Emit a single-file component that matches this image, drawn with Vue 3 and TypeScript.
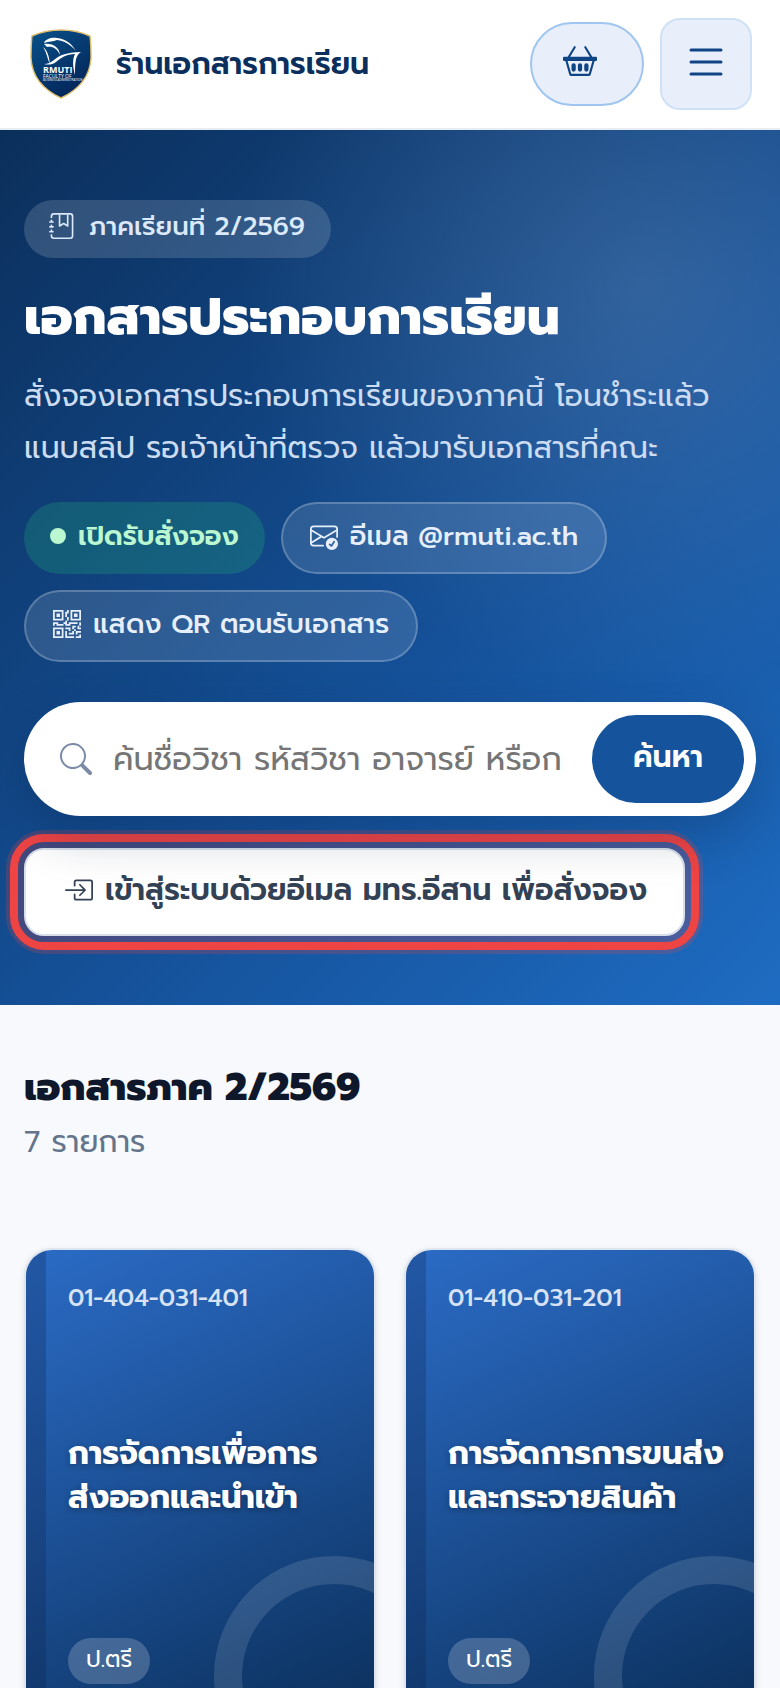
<script setup lang="ts">
import { ref } from 'vue'

interface Course {
  code: string
  title: string
  level: string
}

const query = ref('')
const term = '2/2569'
const courses: Course[] = [
  { code: '01-404-031-401', title: 'การจัดการเพื่อการ\nส่งออกและนำเข้า', level: 'ป.ตรี' },
  { code: '01-410-031-201', title: 'การจัดการการขนส่ง\nและกระจายสินค้า', level: 'ป.ตรี' },
]
</script>

<template>
  <div class="page">
    <header class="topbar">
      <a class="brand" href="#">
        <svg class="logo" viewBox="0 0 62 70" role="img" aria-label="RMUTI">
          <defs>
            <linearGradient id="shield" x1="0" y1="0" x2="0.6" y2="1">
              <stop offset="0" stop-color="#07528a" />
              <stop offset="1" stop-color="#04265a" />
            </linearGradient>
          </defs>
          <path d="M31 1C42 1 51 3 60 7C61 15 61 22 61 29C60 48 48 61 31 69C14 61 2 48 1 29C1 22 1 15 2 7C11 3 20 1 31 1Z" fill="url(#shield)" stroke="#e0bd68" stroke-width="1.4" />
          <path d="M14 14C15 10 22 8 27 9C36 10 42 15 46 22C41 16 35 12 27 11C23 13 19 12 14 14Z" fill="#fff" />
          <path d="M14 15C23 14 29 18 30 26C27 19 22 17 17 18Z" fill="#fff" />
          <path d="M13 18C18 22 19 28 20 35C17 29 17 24 13 18Z" fill="#fff" />
          <path d="M14 35C22 35 24 29 32 26C38 24 44 23 51 23C46 26 45 31 45 46C43 39 42 31 45 25C36 25 31 29 26 33C22 36 18 36 14 35Z" fill="#fff" />
          <text class="logo-name" x="13" y="44">RMUTI</text>
          <text class="logo-sub" x="13" y="49">FACULTY OF</text>
          <text class="logo-tiny" x="13" y="52">BUSINESS ADMINISTRATION</text>
        </svg>
        <span>ร้านเอกสารการเรียน</span>
      </a>
      <div class="actions">
        <button class="cart" type="button" aria-label="ตะกร้า">
          <svg class="i34" viewBox="0 0 16 16" fill="currentColor"><path d="M5.930 1.757 3.383 6h9.234L10.070 1.757a.5.5 0 1 1 .858-.514L13.783 6H15.500a.5.5 0 0 1 .5.5v1a.5.5 0 0 1-.5.5h-.623l-1.844 6.456a.75.75 0 0 1-.722.544H3.690a.75.75 0 0 1-.722-.544L1.123 8H.5a.5.5 0 0 1-.5-.5v-1A.5.5 0 0 1 .5 6h1.717L5.070 1.243a.5.5 0 0 1 .86.514ZM2.163 8l1.714 6h8.246l1.714-6H2.163ZM4 10a1 1 0 0 1 2 0v2a1 1 0 1 1-2 0v-2Zm3 0a1 1 0 0 1 2 0v2a1 1 0 1 1-2 0v-2Zm4-1a1 1 0 0 1 1 1v2a1 1 0 1 1-2 0v-2a1 1 0 0 1 1-1Z" /></svg>
        </button>
        <button class="menu" type="button" aria-label="เมนู">
          <svg class="i48" viewBox="0 0 16 16" fill="currentColor"><path d="M2.500 12a.5.5 0 0 1 .5-.5h10a.5.5 0 0 1 0 1H3a.5.5 0 0 1-.5-.5zm0-4a.5.5 0 0 1 .5-.5h10a.5.5 0 0 1 0 1H3a.5.5 0 0 1-.5-.5zm0-4a.5.5 0 0 1 .5-.5h10a.5.5 0 0 1 0 1H3a.5.5 0 0 1-.5-.5z" /></svg>
        </button>
      </div>
    </header>

    <section class="hero">
      <p class="term">
        <svg class="i26" viewBox="0 0 16 16" fill="currentColor"><path fill-rule="evenodd" d="M6 8V1h1v6.117L8.743 6.070a.5.5 0 0 1 .514 0L11 7.117V1h1v7a.5.5 0 0 1-.757.429L9 7.083 6.757 8.430A.5.5 0 0 1 6 8z" /><path d="M3 0h10a2 2 0 0 1 2 2v12a2 2 0 0 1-2 2H3a2 2 0 0 1-2-2v-1h1v1a1 1 0 0 0 1 1h10a1 1 0 0 0 1-1V2a1 1 0 0 0-1-1H3a1 1 0 0 0-1 1v1H1V2a2 2 0 0 1 2-2z" /><path d="M1 5v-.5a.5.5 0 0 1 1 0V5h.5a.5.5 0 0 1 0 1h-2a.5.5 0 0 1 0-1H1zm0 3v-.5a.5.5 0 0 1 1 0V8h.5a.5.5 0 0 1 0 1h-2a.5.5 0 0 1 0-1H1zm0 3v-.5a.5.5 0 0 1 1 0v.5h.5a.5.5 0 0 1 0 1h-2a.5.5 0 0 1 0-1H1z" /></svg>
        <span>ภาคเรียนที่ {{ term }}</span>
      </p>
      <h1>เอกสารประกอบการเรียน</h1>
      <p class="lead">สั่งจองเอกสารประกอบการเรียนของภาคนี้ โอนชำระแล้ว<br>แนบสลิป รอเจ้าหน้าที่ตรวจ แล้วมารับเอกสารที่คณะ</p>
      <ul class="chips">
        <li class="chip open"><i class="dot"></i><span>เปิดรับสั่งจอง</span></li>
        <li class="chip">
          <svg class="i28" viewBox="0 0 16 16" fill="currentColor"><path d="M2 2a2 2 0 0 0-2 2v8.010A2 2 0 0 0 2 14h5.500a.5.5 0 0 0 0-1H2a1 1 0 0 1-.966-.741l5.640-3.471L8 9.583l7-4.200V8.500a.5.5 0 0 0 1 0V4a2 2 0 0 0-2-2H2Zm3.708 6.208L1 11.105V5.383l4.708 2.825ZM1 4.217V4a1 1 0 0 1 1-1h12a1 1 0 0 1 1 1v.217l-7 4.200-7-4.200Z" /><path d="M16 12.500a3.500 3.500 0 1 1-7 0 3.500 3.500 0 0 1 7 0Zm-1.993-1.679a.5.5 0 0 0-.686.172l-1.170 1.950-.547-.547a.5.5 0 0 0-.708.708l.774.773a.75.75 0 0 0 1.174-.144l1.335-2.226a.5.5 0 0 0-.172-.686Z" /></svg>
          <span>อีเมล @rmuti.ac.th</span>
        </li>
        <li class="chip">
          <svg class="i28" viewBox="0 0 16 16" fill="currentColor"><path d="M2 2h2v2H2V2Z" /><path d="M6 0v6H0V0h6ZM5 1H1v4h4V1ZM4 12H2v2h2v-2Z" /><path d="M6 10v6H0v-6h6Zm-5 1v4h4v-4H1Zm11-9h2v2h-2V2Z" /><path d="M10 0v6h6V0h-6Zm5 1v4h-4V1h4ZM8 1V0h1v2H8v2H7V1h1Zm0 5V4h1v2H8ZM6 8V7h1V6h1v2h1V7h5v1h-4v1H7V8H6Zm0 0v1H2V8H1v1H0V7h3v1h3Zm10 1h-1V7h1v2Zm-1 0h-1v2h2v-1h-1V9Zm-4 0h2v1h-1v1h-1V9Zm2 3v-1h-1v1h-1v1H9v1h3v-2h1Zm0 0h3v1h-2v1h-1v-2Zm-4-1v1h1v-2H7v1h2Z" /><path d="M7 12h1v3h4v1H7v-4Zm9 2v2h-3v-1h2v-1h1Z" /></svg>
          <span>แสดง QR ตอนรับเอกสาร</span>
        </li>
      </ul>
      <form class="search" @submit.prevent>
        <svg class="i32" viewBox="0 0 16 16" fill="currentColor"><path d="M11.742 10.344a6.500 6.500 0 1 0-1.397 1.398h-.001c.03.04.062.078.098.115l3.850 3.850a1 1 0 0 0 1.415-1.414l-3.850-3.850a1.007 1.007 0 0 0-.115-.1zM12 6.500a5.500 5.500 0 1 1-11 0 5.500 5.500 0 0 1 11 0z" /></svg>
        <input v-model="query" type="text" aria-label="ค้นหาเอกสาร" placeholder="ค้นชื่อวิชา รหัสวิชา อาจารย์ หรือก">
        <button type="submit">ค้นหา</button>
      </form>
      <a class="login" href="#">
        <svg class="i28" viewBox="0 0 16 16" fill="currentColor"><path fill-rule="evenodd" d="M6 3.500a.5.5 0 0 1 .5-.5h8a.5.5 0 0 1 .5.5v9a.5.5 0 0 1-.5.5h-8a.5.5 0 0 1-.5-.5v-2a.5.5 0 0 0-1 0v2A1.500 1.500 0 0 0 6.500 14h8a1.500 1.500 0 0 0 1.500-1.500v-9A1.500 1.500 0 0 0 14.500 2h-8A1.500 1.500 0 0 0 5 3.500v2a.5.5 0 0 0 1 0v-2z" /><path fill-rule="evenodd" d="M11.854 8.354a.5.5 0 0 0 0-.708l-3-3a.5.5 0 1 0-.708.708L10.293 7.500H.5a.5.5 0 0 0 0 1h9.793l-2.147 2.146a.5.5 0 0 0 .708.708l3-3z" /></svg>
        <span>เข้าสู่ระบบด้วยอีเมล มทร.อีสาน เพื่อสั่งจอง</span>
      </a>
    </section>

    <main class="catalog">
      <h2>เอกสารภาค {{ term }}</h2>
      <p class="count">7 รายการ</p>
      <div class="grid">
        <article v-for="course in courses" :key="course.code" class="card">
          <div class="cover">
            <span class="code">{{ course.code }}</span>
            <h3>{{ course.title }}</h3>
            <span class="level">{{ course.level }}</span>
          </div>
        </article>
      </div>
    </main>
  </div>
</template>

<style>
body {
  margin: 0;
  background: #f7f9fd;
}
</style>

<style scoped>
.page {
  height: 100vh;
  overflow: hidden;
  background: #f7f9fd;
  color: #0f172a;
  font-family: Prompt, Kanit, "Noto Sans Thai", "Noto Sans", sans-serif;
  font-size: 28px;
}
.page *, .cover::before, .cover::after { box-sizing: border-box; }
h1, h2, h3, p, ul { margin: 0; padding: 0; }
a { color: inherit; text-decoration: none; }
button, input { font: inherit; }
svg { display: block; flex: none; }
.i26 { width: 26px; height: 26px; }
.i28 { width: 28px; height: 28px; }
.i32 { width: 32px; height: 32px; }
.i34 { width: 34px; height: 34px; }
.i48 { width: 48px; height: 48px; }

.topbar {
  display: flex;
  align-items: center;
  justify-content: space-between;
  height: 130px;
  padding: 0 28px 0 30px;
  background: #fff;
  border-bottom: 2px solid #e8edf3;
}
.brand {
  display: flex;
  align-items: center;
  gap: 24px;
  color: #0b2f5c;
  font-size: 30px;
  font-weight: 600;
  white-space: nowrap;
}
.logo { width: 62px; height: 70px; }
.logo-name { font: 700 9px "Open Sans", sans-serif; fill: #fff; }
.logo-sub { font: 400 5px "Open Sans", sans-serif; fill: #fff; }
.logo-tiny { font: 400 3px "Open Sans", sans-serif; fill: #fff; }
.actions { display: flex; align-items: center; gap: 16px; }
.cart, .menu {
  display: flex;
  align-items: center;
  color: #0f4585;
  background: #e8effb;
}
.cart {
  width: 114px;
  height: 84px;
  padding: 0 0 6px 31px;
  border: 2px solid #9fc5f0;
  border-radius: 42px;
}
.menu {
  justify-content: center;
  width: 92px;
  height: 92px;
  padding: 0 0 4px;
  border: 2px solid #cfe1f7;
  border-radius: 20px;
}

.hero {
  display: flex;
  flex-direction: column;
  align-items: flex-start;
  padding: 70px 24px 69px;
  color: #fff;
  background:
    radial-gradient(circle at 82% 18%, rgba(255, 255, 255, .13), transparent 42%),
    linear-gradient(135deg, #0b2f5b 0%, #15529b 60%, #1e6cc2 100%);
}
.term {
  display: flex;
  align-items: center;
  gap: 14px;
  height: 58px;
  padding: 0 26px 6px 25px;
  border-radius: 29px;
  background: rgba(255, 255, 255, .15);
  color: #dbe9fb;
  font-size: 26px;
  font-weight: 500;
  white-space: nowrap;
}
h1 {
  margin-top: 25px;
  font-size: 51px;
  font-weight: 800;
  line-height: 68px;
  white-space: nowrap;
}
.lead {
  margin-top: 19px;
  color: #cbdcf3;
  font-size: 30px;
  line-height: 52px;
  white-space: nowrap;
}
.chips {
  display: flex;
  flex-wrap: wrap;
  gap: 16px;
  margin-top: 28px;
  list-style: none;
}
.chip {
  display: flex;
  align-items: center;
  gap: 12px;
  height: 72px;
  padding: 0 27px 4px;
  border: 2px solid rgba(255, 255, 255, .22);
  border-radius: 36px;
  background: rgba(255, 255, 255, .12);
  color: #e6effb;
  font-size: 27px;
  font-weight: 500;
  white-space: nowrap;
}
.chip.open {
  padding: 0 24px 4px;
  border-color: transparent;
  background: rgba(34, 170, 120, .28) border-box;
  color: #bbf7d0;
  font-weight: 600;
}
.dot { width: 16px; height: 16px; border-radius: 50%; background: #bbf7d0; }
.search {
  position: relative;
  z-index: 1;
  display: flex;
  align-items: center;
  align-self: stretch;
  height: 114px;
  margin-top: 40px;
  padding: 0 12px 0 36px;
  border-radius: 57px;
  background: #fff;
  color: #7c8ba8;
  box-shadow: 0 20px 48px rgba(8, 30, 66, .25);
}
.search input {
  flex: 1;
  min-width: 0;
  height: 60px;
  margin: 0 24px 0 21px;
  padding: 0;
  border: 0;
  outline: 0;
  background: transparent;
  color: #0f172a;
  font-size: 32px;
}
.search input::placeholder { color: #757575; opacity: 1; }
.search button {
  width: 152px;
  height: 88px;
  padding: 0 0 4px;
  border: 0;
  border-radius: 44px;
  background: #15549d;
  color: #fff;
  font-size: 30px;
  font-weight: 600;
}
.login {
  display: flex;
  align-items: center;
  gap: 12px;
  height: 88px;
  margin-top: 32px;
  padding: 0 36px 4px 39px;
  border: 2px solid #d9dfe8;
  border-radius: 20px;
  background: #fff;
  color: #334155;
  font-size: 30px;
  font-weight: 600;
  white-space: nowrap;
  outline: 8px solid #ef4444;
  outline-offset: 6px;
  box-shadow: 0 0 0 18px rgba(239, 68, 68, .22);
}

.catalog { padding: 55px 24px 0; }
h2 { font-size: 38px; font-weight: 800; line-height: 56px; white-space: nowrap; }
.count { margin-top: 2px; color: #64748b; font-size: 30px; line-height: 48px; }
.grid {
  display: grid;
  grid-template-columns: 1fr 1fr;
  gap: 28px;
  margin-top: 82px;
}
.card {
  overflow: hidden;
  border: 2px solid #dfe5ee;
  border-radius: 28px;
  box-shadow: 0 2px 6px rgba(15, 23, 42, .1);
}
.cover {
  position: relative;
  display: flex;
  flex-direction: column;
  align-items: flex-start;
  justify-content: space-between;
  aspect-ratio: 3 / 4;
  padding: 28px 20px 30px 42px;
  overflow: hidden;
  background: linear-gradient(155deg, #2b6bc5 0%, #1d5299 45%, #0b305c 100%);
  color: #fff;
}
.cover::before {
  content: "";
  position: absolute;
  inset: 0 auto 0 0;
  width: 20px;
  background: rgba(10, 30, 70, .25);
}
.cover::after {
  content: "";
  position: absolute;
  right: -80px;
  bottom: -82px;
  width: 240px;
  height: 240px;
  border: 28px solid rgba(255, 255, 255, .12);
  border-radius: 50%;
}
.code { color: #d7e3f5; font-size: 24px; font-weight: 500; line-height: 40px; white-space: nowrap; }
h3 {
  margin-bottom: 4px;
  font-size: 32px;
  font-weight: 700;
  line-height: 44px;
  white-space: pre;
  text-shadow: 0 2px 6px rgba(0, 0, 0, .3);
}
.level {
  height: 46px;
  padding: 0 18px;
  border-radius: 23px;
  background: rgba(255, 255, 255, .2);
  font-size: 23px;
  line-height: 44px;
}
</style>
